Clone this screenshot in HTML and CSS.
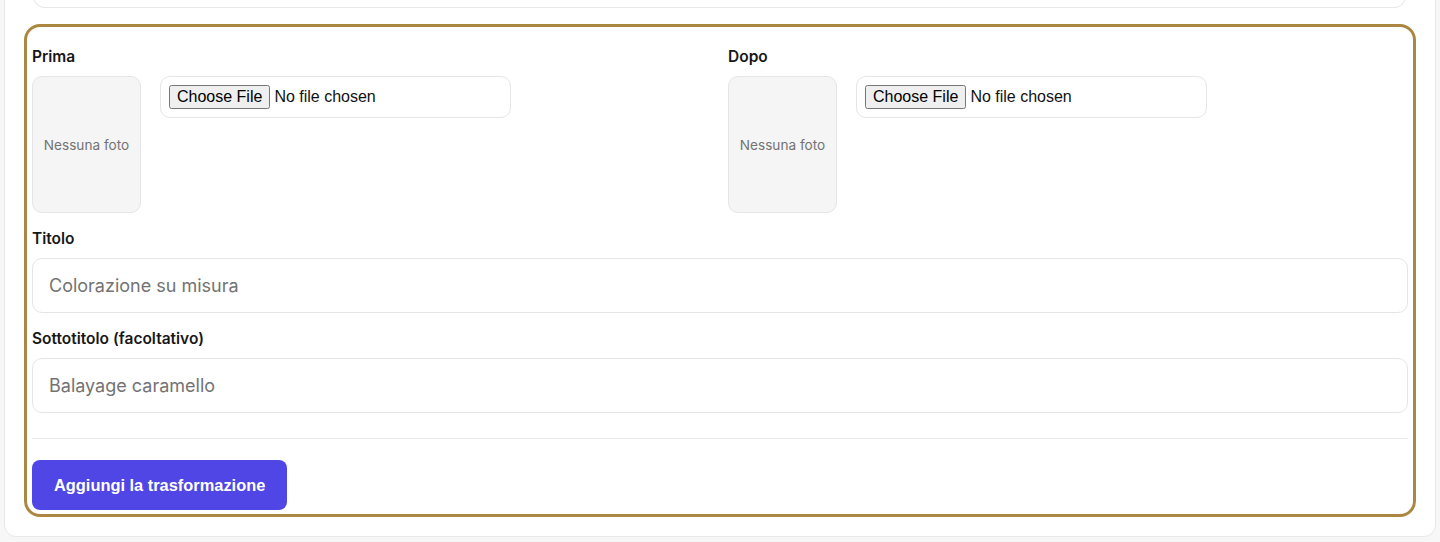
FILE: index.html
```html
<!DOCTYPE html>
<html lang="it">
<head>
    <meta charset="UTF-8">
    <meta name="viewport" content="width=device-width, initial-scale=1.0">
    <title>Trasformazioni</title>
    <link rel="stylesheet" href="styles.css">
</head>
<body>
    <div class="card">
        <div class="item item-prev"></div>

        <form class="item item-edit">
            <div class="photos">
                <div class="photo-field">
                    <label class="label">Prima</label>
                    <div class="photo-row">
                        <div class="photo">Nessuna foto</div>
                        <div class="file-box">
                            <input type="file" accept="image/*">
                        </div>
                    </div>
                </div>
                <div class="photo-field">
                    <label class="label">Dopo</label>
                    <div class="photo-row">
                        <div class="photo">Nessuna foto</div>
                        <div class="file-box">
                            <input type="file" accept="image/*">
                        </div>
                    </div>
                </div>
            </div>

            <div class="field">
                <label class="label" for="titolo">Titolo</label>
                <input class="text-input" type="text" id="titolo" placeholder="Colorazione su misura">
            </div>

            <div class="field">
                <label class="label" for="sottotitolo">Sottotitolo (facoltativo)</label>
                <input class="text-input" type="text" id="sottotitolo" placeholder="Balayage caramello">
            </div>

            <div class="actions">
                <button type="button" class="btn-primary">Aggiungi la trasformazione</button>
            </div>
        </form>
    </div>
</body>
</html>
```

FILE: styles.css
```css
body {
    font-family: Inter, "Noto Sans", sans-serif;
    background-color: #f7f7f7;
    color: #171717;
    margin: 0;
    padding: 0;
}

.card {
    margin: -62px 4px 0 4px;
    background: #fff;
    border: 1px solid #e8e8e8;
    border-radius: 12px;
    padding: 0 19px 19px 19px;
}

.item-prev {
    height: 68px;
    margin: 0 10px 16px 9px;
    border: 1px solid #e8e8e8;
    border-top: none;
    border-radius: 0 0 12px 12px;
}

.item-edit {
    display: flex;
    flex-direction: column;
    gap: 16px;
    border: 3px solid #ab8742;
    border-radius: 16px;
    padding: 20px 5px 4px 5px;
}

.photos {
    display: grid;
    grid-template-columns: 1fr 1fr;
    gap: 16px;
}

.label {
    display: block;
    font-size: 15.5px;
    line-height: 20px;
    font-weight: 600;
    color: #171717;
    margin-bottom: 9px;
}

.photo-row {
    display: flex;
    align-items: flex-start;
    gap: 19px;
}

.photo {
    width: 107px;
    height: 135px;
    background: #f5f5f5;
    border: 1px solid #e6e6e6;
    border-radius: 10px;
    display: flex;
    align-items: center;
    justify-content: center;
    font-size: 13.6px;
    color: #737373;
}

.file-box {
    width: 333px;
    padding: 8px;
    border: 1px solid #e5e5e5;
    border-radius: 10px;
}

.file-box input {
    font-family: "Liberation Sans", Arial, sans-serif;
    font-size: 16px;
    color: #111;
}

.text-input {
    display: block;
    box-sizing: border-box;
    width: 100%;
    height: 55px;
    padding: 0 16px;
    border: 1px solid #e5e5e5;
    border-radius: 10px;
    font-family: Inter, "Noto Sans", sans-serif;
    font-size: 18px;
    color: #171717;
    outline: none;
}

.text-input::placeholder {
    color: #737373;
}

.actions {
    margin-top: 9px;
    border-top: 1px solid #ececec;
    padding-top: 21px;
}

.btn-primary {
    background-color: #4f46e5;
    color: white;
    padding: 14px 22px;
    line-height: 22px;
    border: none;
    border-radius: 8px;
    cursor: pointer;
    font-family: "Liberation Sans", Arial, sans-serif;
    font-size: 16.4px;
    font-weight: bold;
}

.btn-primary:hover {
    background-color: #4338ca;
}
```
